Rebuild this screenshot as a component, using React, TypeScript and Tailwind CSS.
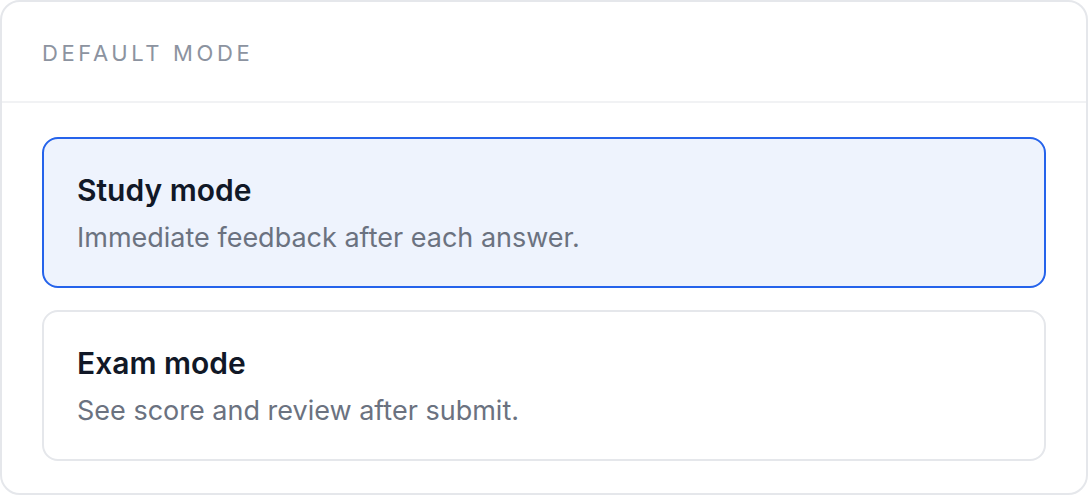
import React, { useState } from 'react';

const modes = [
  { id: 'study', title: 'Study mode', desc: 'Immediate feedback after each answer.' },
  { id: 'exam', title: 'Exam mode', desc: 'See score and review after submit.' },
];

export default function App() {
  const [selected, setSelected] = useState('study');

  return (
    <div className="w-[1088px] h-[496px] bg-white font-['Inter','Liberation_Sans',sans-serif]">
      <div className="h-[495px] flex flex-col border-2 border-[#e5e7eb] rounded-[20px] bg-white overflow-hidden">
        {/* HEADER */}
        <div className="h-[101px] flex items-center px-[40px] border-b-2 border-[#f1f2f4]">
          <h2 className="text-[22px] leading-none tracking-[0.165em] uppercase text-[#8c93a0] pt-[2px]">
            Default mode
          </h2>
        </div>

        {/* OPTIONS */}
        <div className="flex flex-col gap-[22px] px-[40px] pt-[34px]">
          {modes.map((m) => {
            const active = selected === m.id;
            return (
              <button
                key={m.id}
                onClick={() => setSelected(m.id)}
                className={`h-[151px] w-full text-left flex flex-col justify-center gap-[14px] px-[33px] rounded-[16px] ${
                  active ? 'border-[2.5px] border-[#2563eb] bg-[#eef3fd]' : 'border-2 border-[#e5e7eb] bg-white'
                }`}
              >
                <span className="text-[30px] leading-[36px] font-semibold text-[#111827]">{m.title}</span>
                <span className="text-[27px] leading-[32px] text-[#6b7280]">{m.desc}</span>
              </button>
            );
          })}
        </div>
      </div>
    </div>
  );
}
